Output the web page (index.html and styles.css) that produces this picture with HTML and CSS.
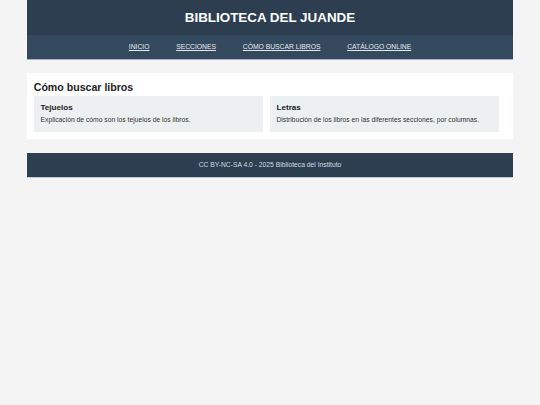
FILE: index.html
```html
<!DOCTYPE html>
<html lang="es">
<head>
<meta charset="utf-8">
<title>Biblioteca del Juande</title>
<link rel="stylesheet" href="styles.css">
</head>
<body>
<div class="wrap">
  <header class="site-header">
    <div class="title-bar"><h1>BIBLIOTECA DEL JUANDE</h1></div>
    <nav class="nav">
      <a href="#">INICIO</a>
      <a href="#">SECCIONES</a>
      <a href="#">CÓMO BUSCAR LIBROS</a>
      <a href="#">CATÁLOGO ONLINE</a>
    </nav>
  </header>
  <main class="card">
    <h2>Cómo buscar libros</h2>
    <div class="grid">
      <div class="box">
        <h3>Tejuelos</h3>
        <p>Explicación de cómo son los tejuelos de los libros.</p>
      </div>
      <div class="box">
        <h3>Letras</h3>
        <p>Distribución de los libros en las diferentes secciones, por columnas.</p>
      </div>
    </div>
  </main>
  <footer class="footer">CC BY-NC-SA 4.0 - 2025 Biblioteca del Instituto</footer>
</div>
</body>
</html>
```
FILE: styles.css
```css
html, body {
  margin: 0;
  padding: 0;
}
body {
  background: #f4f4f4;
  font-family: "Liberation Sans", Arial, sans-serif;
  color: #222;
}
.wrap {
  width: 486px;
  margin: 0 auto;
}
.title-bar {
  background: #2c3e50;
  height: 35px;
  display: flex;
  align-items: center;
  justify-content: center;
}
.title-bar h1 {
  margin: 0;
  font-size: 13.4px;
  font-weight: bold;
  color: #fff;
  line-height: 1;
  padding-top: 1px;
}
.nav {
  background: #34495e;
  height: 24px;
  border-bottom: 1.35px solid #a4b2c6;
  display: flex;
  align-items: center;
  justify-content: center;
  gap: 26.8px;
}
.nav a {
  color: #e4e9ee;
  font-size: 6.75px;
  text-decoration: underline;
  line-height: 1;
  padding-top: 1px;
}
.card {
  display: block;
  background: #fff;
  margin-top: 13.3px;
  padding: 7.5px 6.75px 7px;
}
.card h2 {
  margin: 0 0 2px;
  font-size: 10.6px;
  line-height: 13px;
  font-weight: bold;
  color: #222;
}
.grid {
  display: grid;
  grid-template-columns: 229px 229px;
  gap: 7px;
}
.box {
  background: #ecf0f1;
  padding: 7.7px 6.75px 8.8px;
}
.box h3 {
  margin: 0 0 3px;
  font-size: 8.1px;
  line-height: 9.3px;
  font-weight: bold;
  color: #222;
}
.box p {
  margin: 0;
  font-size: 6.75px;
  line-height: 7.8px;
  color: #333;
}
.footer {
  margin-top: 13.5px;
  background: #2c3e50;
  height: 24px;
  border-bottom: 1.35px solid #c3cedd;
  display: flex;
  align-items: center;
  justify-content: center;
  color: #d6dbe0;
  font-size: 6.75px;
}
```
